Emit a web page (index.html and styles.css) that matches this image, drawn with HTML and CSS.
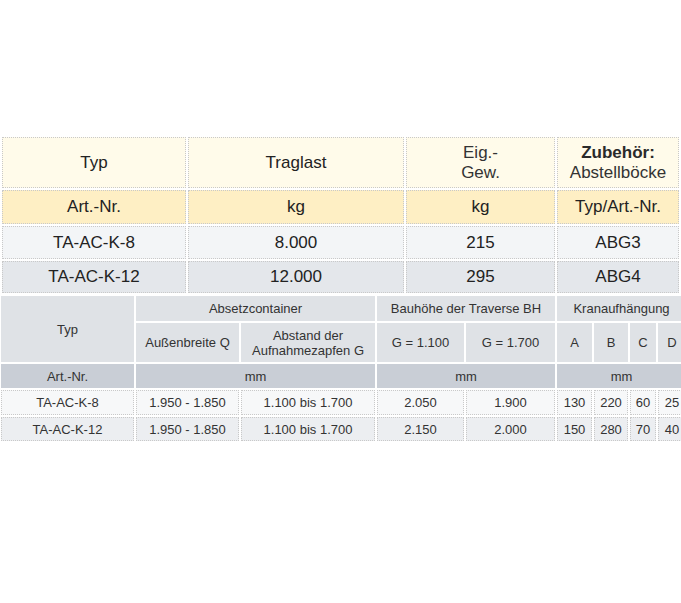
FILE: index.html
```html
<!DOCTYPE html>
<html lang="de">
<head>
<meta charset="utf-8">
<title>Traverse TA-AC-K</title>
<link rel="stylesheet" href="styles.css">
</head>
<body>
<div class="page">
  <table class="top">
    <colgroup>
      <col class="c1"><col class="c2"><col class="c3"><col class="c4">
    </colgroup>
    <tr class="r-head">
      <td>Typ</td>
      <td>Traglast</td>
      <td class="two">Eig.-<br>Gew.</td>
      <td class="two"><b>Zubehör:</b><br>Abstellböcke</td>
    </tr>
    <tr class="r-unit">
      <td>Art.-Nr.</td>
      <td>kg</td>
      <td>kg</td>
      <td>Typ/Art.-Nr.</td>
    </tr>
    <tr class="r-a">
      <td>TA-AC-K-8</td>
      <td>8.000</td>
      <td>215</td>
      <td>ABG3</td>
    </tr>
    <tr class="r-b">
      <td>TA-AC-K-12</td>
      <td>12.000</td>
      <td>295</td>
      <td>ABG4</td>
    </tr>
  </table>

  <table class="bottom">
    <colgroup>
      <col class="b1"><col class="b2"><col class="b3"><col class="b4"><col class="b5">
      <col class="b6"><col class="b7"><col class="b8"><col class="b9">
    </colgroup>
    <tr class="h1">
      <th rowspan="2">Typ</th>
      <th colspan="2">Absetzcontainer</th>
      <th colspan="2">Bauhöhe der Traverse BH</th>
      <th colspan="4">Kranaufhängung</th>
    </tr>
    <tr class="h2">
      <th>Außenbreite Q</th>
      <th>Abstand der<br>Aufnahmezapfen G</th>
      <th>G = 1.100</th>
      <th>G = 1.700</th>
      <th>A</th>
      <th>B</th>
      <th>C</th>
      <th>D</th>
    </tr>
    <tr class="unit">
      <th>Art.-Nr.</th>
      <th colspan="2">mm</th>
      <th colspan="2">mm</th>
      <th colspan="4">mm</th>
    </tr>
    <tr class="d1">
      <td>TA-AC-K-8</td>
      <td>1.950 - 1.850</td>
      <td>1.100 bis 1.700</td>
      <td>2.050</td>
      <td>1.900</td>
      <td>130</td>
      <td>220</td>
      <td>60</td>
      <td>25</td>
    </tr>
    <tr class="d2">
      <td>TA-AC-K-12</td>
      <td>1.950 - 1.850</td>
      <td>1.100 bis 1.700</td>
      <td>2.150</td>
      <td>2.000</td>
      <td>150</td>
      <td>280</td>
      <td>70</td>
      <td>40</td>
    </tr>
  </table>
</div>
</body>
</html>
```

FILE: styles.css
```css
html, body {
  margin: 0;
  padding: 0;
  background: #ffffff;
}

.page {
  width: 681px;
  padding-top: 135px;
  font-family: "Liberation Sans", Arial, sans-serif;
}

table {
  border-collapse: separate;
  table-layout: fixed;
}

/* ---------- top table ---------- */
.top {
  width: 681px;
  border-spacing: 2px;
  font-size: 17px;
  color: #222222;
}
.top .c1 { width: 184px; }
.top .c2 { width: 216px; }
.top .c3 { width: 149px; }
.top .c4 { width: 122px; }

.top td {
  padding: 0;
  text-align: center;
  vertical-align: middle;
  border: 1px dotted #c9c9c9;
  line-height: 20px;
}
.top b { font-weight: bold; color: #2a2a2a; }

.top .r-head td { height: 49px; background: #fffbea; }
.top .r-head td.two { color: #333333; }
.top .r-unit td { height: 32px; background: #feefc4; }
.top .r-a td { height: 31px; background: #f3f5f7; }
.top .r-b td { height: 30px; background: #e4e7eb; }

/* ---------- bottom table ---------- */
.bottom {
  width: 683px;
  margin-left: -1px;
  margin-top: -1px;
  border-spacing: 2px;
  font-size: 13px;
  color: #333333;
}
.bottom .b1 { width: 133px; }
.bottom .b2 { width: 103px; }
.bottom .b3 { width: 134px; }
.bottom .b4 { width: 87px; }
.bottom .b5 { width: 89px; }
.bottom .b6 { width: 35px; }
.bottom .b7 { width: 34px; }
.bottom .b8 { width: 26px; }
.bottom .b9 { width: 28px; }

.bottom th, .bottom td {
  padding: 0;
  text-align: center;
  vertical-align: middle;
  font-weight: normal;
  line-height: 15px;
}
.bottom th { background: #dfe2e6; }
.bottom .h1 th { height: 25px; }
.bottom .h2 th { height: 39px; }
.bottom .unit th { height: 24px; background: #c9ced6; }

.bottom td { border: 1px dotted #c9c9c9; }
.bottom .d1 td { height: 23px; background: #f7f8f9; }
.bottom .d2 td { height: 22px; background: #eceef1; }
```
